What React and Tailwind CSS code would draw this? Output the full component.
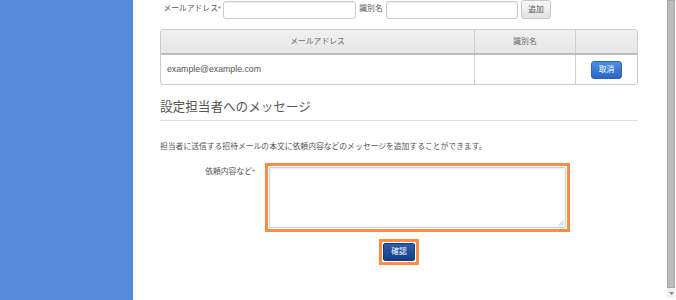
export default function App() {
  const jp = { fontFamily: '"Liberation Sans", "Noto Sans CJK JP", sans-serif' };
  return (
    <div className="flex w-[676px] h-[300px] overflow-hidden bg-white text-[#555]" style={jp}>
      <div className="w-[133px] shrink-0 bg-[#558bd9]" />
      <div className="w-[533px] shrink-0 pl-[27px] pr-[28px] flex flex-col">
        {/* row 1 */}
        <div className="flex items-start h-[19px]">
          <div className="w-[61px] pt-[4px] text-right text-[7.8px] leading-[10px] whitespace-nowrap">
            メールアドレス<span className="text-[#e0433a]">*</span>
          </div>
          <div className="ml-[2px] mt-[1px] w-[133px] h-[18px] border border-[#ccc] rounded-[3px] bg-white shadow-[inset_0_1px_1px_rgba(0,0,0,0.06)]" />
          <div className="w-[30px] pt-[4px] text-center text-[7.8px] leading-[10px] whitespace-nowrap">識別名</div>
          <div className="mt-[1px] w-[132px] h-[18px] border border-[#ccc] rounded-[3px] bg-white shadow-[inset_0_1px_1px_rgba(0,0,0,0.06)]" />
          <div className="ml-[3px] w-[30px] h-[19px] border border-[#c8c8c8] rounded-[3px] bg-gradient-to-b from-[#f8f8f8] to-[#e2e2e2] flex items-center justify-center text-[7.8px] text-[#555]">
            追加
          </div>
        </div>
        {/* table */}
        <div className="mt-[10px] w-[478px] border border-[#ccc] rounded-[3px] overflow-hidden">
          <div className="grid grid-cols-[313px_101px_62px] h-[25px] bg-gradient-to-b from-[#f0f0f0] to-[#e7e7e7] border-b-2 border-[#bdbdbd]">
            <div className="flex items-center justify-center text-[7.8px] text-[#666]">メールアドレス</div>
            <div className="flex items-center justify-center text-[7.8px] text-[#666] border-l border-[#d0d0d0]">識別名</div>
            <div className="border-l border-[#d0d0d0]" />
          </div>
          <div className="grid grid-cols-[313px_101px_62px] h-[29px]">
            <div className="flex items-center pl-[6px] text-[8.75px] text-[#555]" style={{ fontFamily: '"Liberation Sans", sans-serif' }}>
              example@example.com
            </div>
            <div className="border-l border-[#d0d0d0]" />
            <div className="border-l border-[#d0d0d0] flex items-center justify-center">
              <div className="w-[31px] h-[18px] rounded-[3px] border border-[#2b62bd] bg-gradient-to-b from-[#4f8fe2] to-[#2a66c8] flex items-center justify-center text-[7.8px] text-white">
                取消
              </div>
            </div>
          </div>
        </div>
        {/* title */}
        <div className="mt-[15px] h-[15px] leading-[15px] text-[12.6px] text-[#555] whitespace-nowrap">設定担当者へのメッセージ</div>
        <div className="mt-[5px] h-px bg-[#dcdcdc]" />
        <div className="mt-[20px] h-[12px] leading-[12px] text-[7.8px] text-[#555] whitespace-nowrap">
          担当者に送信する招待メールの本文に依頼内容などのメッセージを追加することができます。
        </div>
        {/* textarea row */}
        <div className="mt-[10px] flex items-start">
          <div className="w-[95px] pt-[3px] text-right text-[7.8px] leading-[12px] whitespace-nowrap">
            依頼内容など<span className="text-[#e0433a]">*</span>
          </div>
          <div className="ml-[10px] w-[305px] h-[69px] border-[3px] border-[#fb8b45] p-px bg-white">
            <div className="relative w-full h-full border border-[#cfcfcf] rounded-[2px] shadow-[inset_0_1px_2px_rgba(0,0,0,0.08)]">
              <svg className="absolute right-[1px] bottom-[1px]" width="6" height="6" viewBox="0 0 6 6">
                <path d="M5.5 1 L1 5.5 M5.5 3.5 L3.5 5.5" stroke="#999" strokeWidth="0.8" />
              </svg>
            </div>
          </div>
        </div>
        {/* confirm */}
        <div className="mt-[7px] flex justify-center">
          <div className="w-[40px] h-[26px] border-[3px] border-[#fb8b45] p-px bg-white">
            <div className="w-full h-full rounded-[2px] border border-[#0f3a7e] bg-gradient-to-b from-[#2a5eab] to-[#123f88] flex items-center justify-center text-[7.8px] text-white">
              確認
            </div>
          </div>
        </div>
      </div>
      {/* scrollbar */}
      <div className="w-[10px] shrink-0 flex flex-col bg-white">
        <div className="ml-[1px] w-[8px] h-[288px] bg-[#bcbcbc] border border-[#a9a9a9]" />
        <div className="ml-[1px] w-[8px] h-[10px] bg-[#f1f1f1] flex items-center justify-center">
          <svg width="5" height="3" viewBox="0 0 5 3"><path d="M0 0 H5 L2.5 3 Z" fill="#888" /></svg>
        </div>
      </div>
    </div>
  );
}
